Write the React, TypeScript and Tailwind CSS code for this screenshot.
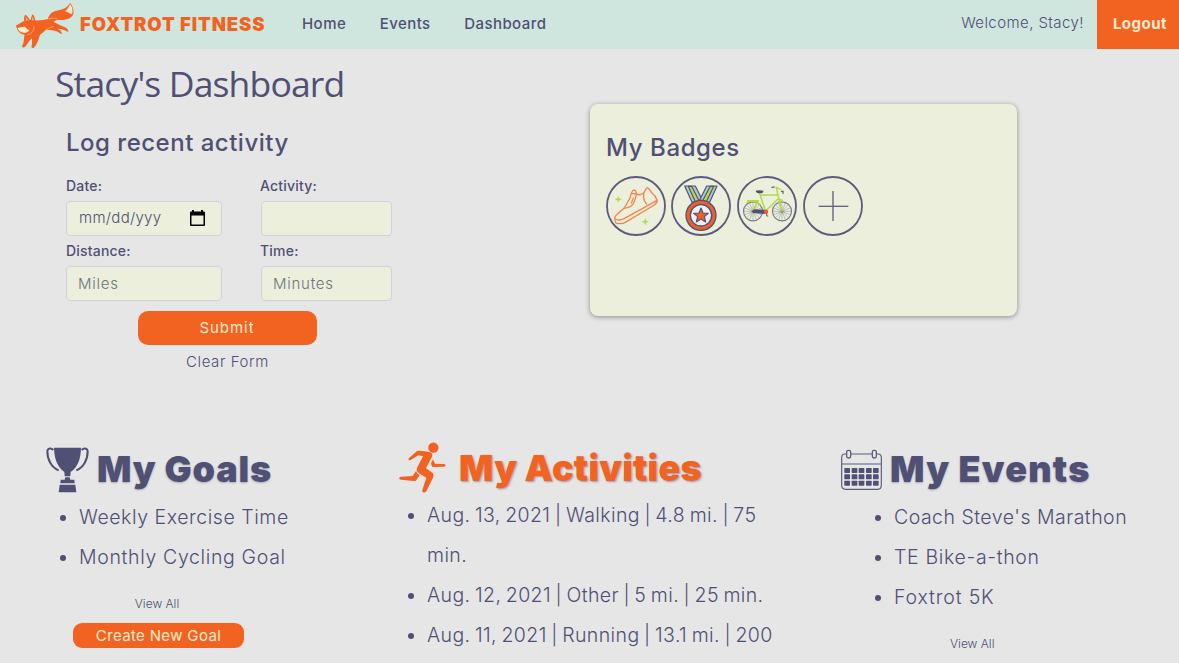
import React from "react";

function FoxLogo() {
  return (
    <svg className="h-[46px] w-[60px] shrink-0" viewBox="46 3 180 138">
      <path fill="#f26322" d="M48 74 C58 70 64 64 74 60 C72 52 73 46 77 41 C83 45 87 50 90 56 L94 56 C94 50 96 44 99 40 C104 45 106 51 106 58 C120 59 134 56 145 54 C147 42 156 32 170 29 C190 25 204 21 211 5 C219 14 223 27 221 39 C217 51 202 58 183 57 C173 56 166 57 162 63 C172 67 178 72 189 76 C199 79 205 84 207 92 C199 91 194 86 184 84 L174 83 C181 87 187 92 187 99 C179 97 176 91 166 89 C153 87 144 86 138 86 C131 94 127 97 121 101 C116 116 112 132 101 142 L95 139 C98 128 97 119 97 112 C87 118 84 134 72 140 L66 136 C75 125 71 112 75 102 C60 98 54 90 52 82 Z" />
      <path fill="#fbecd2" d="M54 80 C64 80 68 76 77 78 C81 84 86 86 89 88 C83 96 74 98 66 94 C59 91 55 86 54 80 Z" />
      <path fill="#fbecd2" d="M211 9 C219 19 220 29 217 40 C213 34 210 42 207 34 C203 37 201 30 195 31 C203 26 208 18 211 9 Z" />
      <path fill="#f8bd95" d="M78 47 L86 57 L79 60 Z M99 46 L102 57 L97 59 Z" />
      <path fill="none" stroke="#f9c8a2" strokeWidth="1.8" d="M103 76 C104 88 97 98 83 102 M147 54 C157 51 167 51 173 54 M140 85 C150 82 153 77 162 77" />
    </svg>
  );
}

function Ring({ className = "", children }: { className?: string; children: React.ReactNode }) {
  return (
    <svg className={`size-[60px] shrink-0 ${className}`} viewBox="0 0 180 180" fill="none">
      <circle cx="90" cy="90" r="87" stroke="#5b5c7b" strokeWidth="5.5" />
      {children}
    </svg>
  );
}

function ShoeBadge() {
  return (
    <Ring className="-mr-px">
      <g stroke="#f5834f" strokeWidth="4" strokeLinejoin="round" strokeLinecap="round">
        <path d="M27 122 C34 112 47 104 55 96 L72 66 C74 57 76 46 83 42 C90 42 91 48 90 53 C97 58 105 57 113 51 C116 46 118 38 124 35 C130 36 132 45 138 51 C147 58 150 64 153 72 C155 80 151 83 145 87 L58 139 C50 144 38 143 31 142 C26 137 26 130 27 122 Z" />
        <path d="M28 129 C36 134 46 132 54 128 L152 74 M113 52 C112 63 113 75 122 84 M76 52 L91 54 C89 68 85 83 75 91 C69 96 61 95 54 97 M82 67 L76 81" />
      </g>
      <g fill="#b5d94d">
        <path d="M37 59 L40 67 L48 70 L40 73 L37 80 L34 73 L27 70 L34 67 Z" />
        <path d="M118 126 L121 134 L129 137 L121 140 L118 148 L115 140 L107 137 L115 134 Z" />
      </g>
    </Ring>
  );
}

function MedalBadge() {
  return (
    <Ring>
      <g stroke="#50547a" strokeWidth="3.5" strokeLinejoin="round">
        <path fill="#b5c4cb" d="M41 30 H73 L94 72 L63 79 Z" />
        <path fill="#b5c4cb" d="M107 30 H138 L116 79 L86 72 Z" />
        <path fill="#b5d94d" d="M52 31 H62 L83 72 L73 77 Z" />
        <path fill="#b5d94d" d="M118 31 H128 L106 77 L96 72 Z" />
        <circle cx="90" cy="118" r="45" fill="#ed6127" strokeWidth="4" />
        <circle cx="90" cy="118" r="32" fill="#edf1f3" strokeWidth="4" />
        <path fill="#ed6127" d="M90 96 L96 111 L112 112 L100 122 L104 138 L90 129 L76 138 L80 122 L68 112 L84 111 Z" />
      </g>
    </Ring>
  );
}

const SPOKES = [0, 22.5, 45, 67.5, 90, 112.5, 135, 157.5];

function Wheel({ x }: { x: number }) {
  return (
    <g transform={`translate(${x} 106)`} stroke="#777a8c">
      <circle r="28.5" strokeWidth="3.5" />
      {SPOKES.map((a) => (
        <path key={a} d="M-27 0 H27" strokeWidth="1.2" transform={`rotate(${a})`} />
      ))}
      <circle r="3" strokeWidth="2" />
    </g>
  );
}

function BikeBadge() {
  return (
    <Ring>
      <Wheel x={48} />
      <Wheel x={135} />
      <g stroke="#b5d944" strokeWidth="4.5" strokeLinecap="round" strokeLinejoin="round">
        <path d="M67 49 L85 104 M73 57 L122 56 M125 67 L86 105 M118 35 L123 58 L135 105 M32 74 H64 L48 104 M31 79 C45 73 60 77 70 85 M118 34 L132 41 M124 78 C130 67 136 72 137 77" />
      </g>
      <path fill="#4f5073" d="M56 44 C62 42 72 42 79 44 C80 50 75 52 69 52 C61 52 57 50 56 44 Z" />
      <path stroke="#4f5073" strokeWidth="3.5" strokeLinecap="round" d="M105 34 L112 33 M134 46 L138 46 L138 52" />
      <path fill="#4f5073" d="M44 105 L53 100 L82 101 L90 108 L84 114 L49 111 Z" />
      <circle cx="87" cy="107" r="6.5" fill="#ed5a22" />
      <path stroke="#9a5140" strokeWidth="3" d="M89 110 V120 H94" />
    </Ring>
  );
}

function AddBadge() {
  return (
    <Ring>
      <path stroke="#85869b" strokeWidth="5.5" d="M90 45 V135" />
      <path stroke="#626380" strokeWidth="4" d="M47 91 H136" />
    </Ring>
  );
}

function TrophyIcon() {
  return (
    <svg className="h-[46px] w-[44px] shrink-0" viewBox="48 51 132 138">
      <path fill="#4f5073" d="M72 53 H153 C152 88 144 110 122 126 L121 139 H104 L103 126 C82 110 73 88 72 53 Z" />
      <path fill="none" stroke="#4f5073" strokeWidth="6" d="M70 60 C64 53 53 53 52 64 C52 90 65 113 86 121 M155 60 C161 53 172 53 173 64 C173 90 160 113 139 121" />
      <path fill="#4f5073" d="M106 142 H119 L121 149 H133 L134 160 H91 L92 149 H104 Z M89 164 H136 L139 187 H86 Z" />
    </svg>
  );
}

function RunnerIcon() {
  return (
    <svg className="h-[51px] w-[47px] shrink-0" viewBox="26 37 141 153">
      <circle cx="129" cy="54" r="15.5" fill="#f26322" />
      <path fill="#f26322" d="M57 84 L80 64 C89 61 107 65 119 68 C127 71 128 78 123 85 L107 116 L126 129 C131 133 130 139 128 144 L108 185 C103 192 94 188 96 181 L108 144 L85 130 C78 126 78 119 81 113 L98 80 L84 77 L61 91 C54 93 52 88 57 84 Z" />
      <path fill="#f26322" d="M128 89 L134 102 L161 103 C168 104 167 110 161 111 L130 112 C126 112 124 109 123 105 L122 101 Z" />
      <path fill="#f26322" d="M77 124 C79 130 83 133 88 136 L79 150 C77 153 75 154 71 154 L32 150 C25 149 25 142 32 141 L67 139 Z" />
    </svg>
  );
}

const CAL_COLS = [42, 64, 85, 107, 128];
const CAL_ROWS = [113, 132, 151];

function CalendarIcon() {
  return (
    <svg className="h-[42px] w-[42px] shrink-0" viewBox="32 56 126 126" fill="none" stroke="#5b5c7b" strokeWidth="4">
      <path d="M49 71 H44 C37 71 34 75 34 82 V165 C34 173 38 177 46 177 H142 C150 177 153 173 153 165 V82 C153 75 150 71 143 71 H138 M61 71 H125 M34 101 H153" strokeWidth="3.5" />
      <rect x="49" y="60" width="12" height="23" rx="5" />
      <rect x="126" y="60" width="12" height="23" rx="5" />
      <g fill="#4f5073" stroke="none">
        {CAL_ROWS.map((y) =>
          CAL_COLS.map((x) => <rect key={`${x}-${y}`} x={x} y={y} width="17" height="15" rx="2" />),
        )}
      </g>
    </svg>
  );
}

const label = "h-[20px] text-[14px] leading-[20px] font-medium tracking-[0.2px]";
const field =
  "flex h-[35px] items-center rounded-[4px] border border-[#ced4da] bg-[#ecefdb] pr-[12px] pl-[11px] text-[15px] font-light";
const placeholder = "pt-[2px] tracking-[0.75px] text-[#6c757d]";
const list =
  "list-disc text-[19.5px] leading-[40px] font-light whitespace-nowrap marker:text-[#4f5073]";
const heading = "text-[36px] leading-[44px] font-black whitespace-nowrap";

export default function App() {
  return (
    <div className="flex h-[663px] w-[1179px] flex-col overflow-hidden bg-[#e6e6e6] font-['Inter','Liberation_Sans',sans-serif] text-[#4f5073]">
      <header className="flex h-[49px] shrink-0 items-center bg-[#cfe6df]">
        <div className="flex w-[302px] items-center pl-[15px]">
          <FoxLogo />
          <span className="ml-[5px] pb-[2px] text-[18.5px] leading-[24px] font-black tracking-[0.9px] whitespace-nowrap text-[#f26322]">FOXTROT FITNESS</span>
        </div>
        <nav className="flex items-center gap-[33.5px] pb-[1px] text-[15px] leading-[24px] font-medium tracking-[0.45px]">
          <a>Home</a>
          <a>Events</a>
          <a>Dashboard</a>
        </nav>
        <span className="mr-[13px] ml-auto pb-[3px] text-[15px] leading-[24px] font-light tracking-[0.43px]">Welcome, Stacy!</span>
        <a className="flex h-full w-[82px] items-center justify-center bg-[#f26322] pl-[4px] text-[15px] font-bold tracking-[0.5px] text-[#f8ecd0]">Logout</a>
      </header>

      <section className="flex h-[391px] shrink-0">
        <div className="w-[590px]">
          <h1 className="mt-[10px] ml-[55px] h-[49px] font-['Open_Sans','Noto_Sans',sans-serif] text-[35.5px] leading-[48px] font-normal tracking-[-0.85px]">Stacy's Dashboard</h1>
          <form className="ml-[66px] w-[326px]">
            <h2 className="mt-[19px] h-[32px] text-[24px] leading-[32px] font-medium tracking-[0.5px]">Log recent activity</h2>
            <div className="mt-[17px] grid grid-cols-[156px_131px] gap-x-[39px]">
              <div className={label}>Date:</div>
              <div className={`${label} -ml-px`}>Activity:</div>
              <div className={`${field} mt-[5px] justify-between`}>
                <span className="pl-px tracking-[0.3px] whitespace-nowrap">mm/dd/yyy</span>
                <svg className="mr-[4px] h-[17px] w-[15px]" viewBox="0 0 15 17">
                  <path fill="#000" fillRule="evenodd" d="M2 0 H4 V1.5 H11 V0 H13 V1.5 H14 Q15 1.5 15 2.5 V15 Q15 16 14 16 H1 Q0 16 0 15 V2.5 Q0 1.5 1 1.5 H2 Z M1.5 5.5 V14.6 H13.5 V5.5 Z" />
                </svg>
              </div>
              <div className={`${field} mt-[5px]`} />
              <div className={`${label} mt-[5px]`}>Distance:</div>
              <div className={`${label} mt-[5px] -ml-px`}>Time:</div>
              <div className={`${field} ${placeholder} mt-[5px]`}>Miles</div>
              <div className={`${field} ${placeholder} mt-[5px]`}>Minutes</div>
            </div>
            <div className="flex w-[322px] flex-col items-center">
              <button type="button" className="mt-[10px] h-[34px] w-[179px] rounded-[10px] bg-[#f26322] text-[15px] tracking-[0.95px] text-[#f8ecd0]">Submit</button>
              <a className="mt-[5px] pl-px text-[15px] leading-[24px] font-light tracking-[0.6px]">Clear Form</a>
            </div>
          </form>
        </div>
        <div className="mt-[55px] h-[212px] w-[427px] rounded-[8px] bg-[#ecefdb] px-[16px] pt-[28px] shadow-[0_1px_5px_rgba(0,0,0,0.4)]">
          <h2 className="h-[32px] text-[24px] leading-[32px] font-medium tracking-[0.6px]">My Badges</h2>
          <div className="mt-[12px] flex gap-[6px]">
            <ShoeBadge />
            <MedalBadge />
            <BikeBadge />
            <AddBadge />
          </div>
        </div>
      </section>

      <section className="flex min-h-0 flex-1">
        <div className="w-[353px] pl-[46px]">
          <div className="flex h-[57px] items-center pt-[2px]">
            <TrophyIcon />
            <h2 className={`${heading} ml-[7px] -mt-[2px] tracking-[0.85px] [text-shadow:0_1px_2px_rgba(79,80,115,0.4)]`}>My Goals</h2>
          </div>
          <ul className={`${list} pl-[33px]`}>
            <li className="tracking-[0.55px]">Weekly Exercise Time</li>
            <li className="tracking-[0.65px]">Monthly Cycling Goal</li>
          </ul>
          <div className="ml-[27px] flex w-[171px] flex-col items-center">
            <a className="mt-[17px] mr-[3px] text-[12px] leading-[20px] font-light">View All</a>
            <button type="button" className="mt-[9px] h-[25px] w-[171px] rounded-[9px] bg-[#f26322] text-[15px] leading-[25px] tracking-[0.35px] text-[#f8ecd0]">Create New Goal</button>
          </div>
        </div>
        <div className="w-[487px] pl-[46px]">
          <div className="flex h-[55px] items-center">
            <RunnerIcon />
            <h2 className={`${heading} ml-[13px] tracking-[0.2px] text-[#f26322] [text-shadow:1px_1px_2px_rgba(79,80,115,0.5)]`}>My Activities</h2>
          </div>
          <ul className={`${list} pl-[28px] tracking-[0.4px] [word-spacing:-1.4px]`}>
            <li>Aug. 13, 2021 | Walking | 4.8 mi. | 75<br />min.</li>
            <li>Aug. 12, 2021 | Other | 5 mi. | 25 min.</li>
            <li>Aug. 11, 2021 | Running | 13.1 mi. | 200</li>
          </ul>
        </div>
        <div className="w-[293px]">
          <div className="flex h-[57px] items-center pt-[2px] pl-px">
            <CalendarIcon />
            <h2 className={`${heading} ml-[7px] -mt-[2px] tracking-[1.2px] [text-shadow:0_1px_2px_rgba(79,80,115,0.4)]`}>My Events</h2>
          </div>
          <ul className={`${list} pl-[54px]`}>
            <li className="tracking-[0.48px]">Coach Steve's Marathon</li>
            <li className="tracking-[0.65px]">TE Bike-a-thon</li>
            <li className="tracking-[0.85px]">Foxtrot 5K</li>
          </ul>
          <a className="mt-[17px] ml-[110px] block text-[12px] leading-[20px] font-light">View All</a>
        </div>
      </section>
    </div>
  );
}
